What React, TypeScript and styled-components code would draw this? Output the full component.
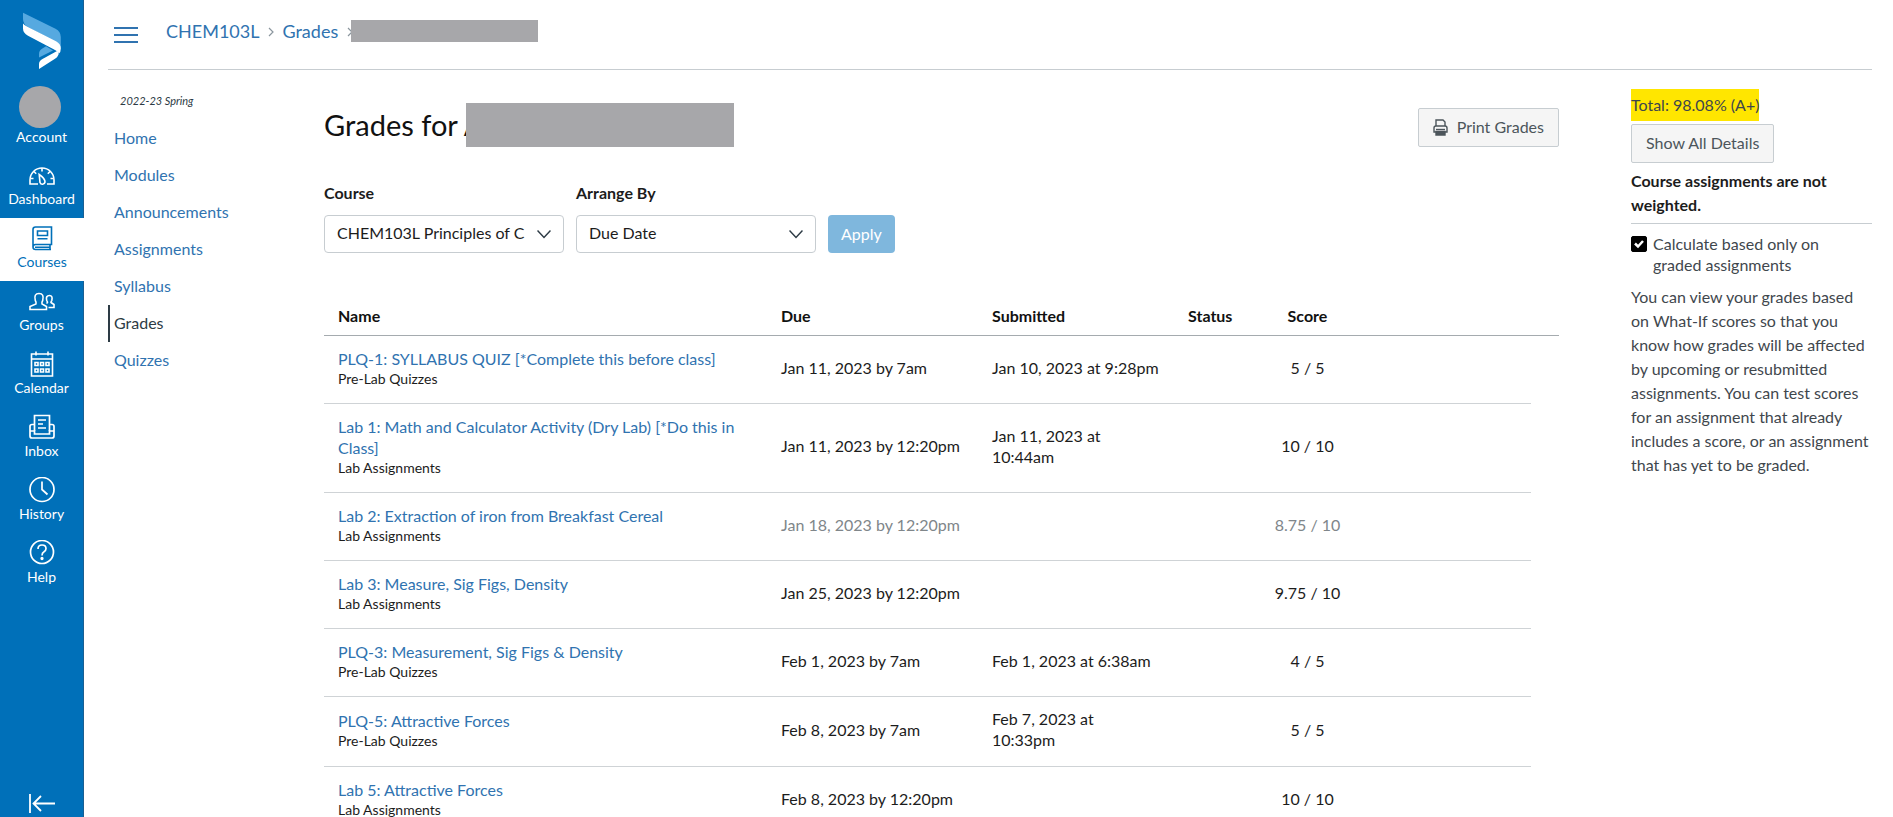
import React from "react";
import styled, { createGlobalStyle, css } from "styled-components";

const BLUE = "#0070b9";
const LINK = "#3073b0";
const TEXT = "#2d3b45";
const INK = "#1c1c1c";
const MASK = "#a7a7aa";

const GlobalStyle = createGlobalStyle`
  *, *::before, *::after { box-sizing: border-box; }
  body {
    margin: 0;
    background: #fff;
    color: ${INK};
    font-family: Lato, "Open Sans", sans-serif;
    font-size: 16px;
    line-height: 24px;
  }
  button, input, select { font: inherit; }
  a { color: ${LINK}; text-decoration: none; }
`;

const Shell = styled.div`
  display: flex;
  height: 100vh;
`;

/* Global navigation */

const GlobalNav = styled.nav`
  display: flex;
  flex-direction: column;
  flex: none;
  width: 84px;
  background: ${BLUE};
  border-right: 1px solid #1a5f92;
`;

const LogoLink = styled.a`
  display: block;
  height: 86px;
  padding: 12px 0 0 22px;
`;

const NavList = styled.ul`
  list-style: none;
  margin: 0;
  padding: 0;
`;

const navLook = css<{ $active?: boolean }>`
  display: flex;
  flex-direction: column;
  align-items: center;
  color: ${(p) => (p.$active ? BLUE : "#fff")};
  background: ${(p) => (p.$active ? "#fff" : "transparent")};
  font-size: 14px;
  line-height: 18px;
`;

const AccountLink = styled.a`
  ${navLook}
  height: 69px;
`;

const Avatar = styled.span`
  width: 42px;
  height: 42px;
  margin-right: 4px;
  border-radius: 50%;
  background: ${MASK};
`;

const NavLink = styled.a<{ $active?: boolean }>`
  ${navLook}
  gap: 2px;
  height: 63px;
  padding-top: 7px;
  margin-right: ${(p) => (p.$active ? "-1px" : "0")};
`;

const CollapseButton = styled.button`
  display: flex;
  justify-content: center;
  margin-top: auto;
  padding: 0 0 1px;
  border: 0;
  color: #fff;
  background: transparent;
`;

/* Page */

const Page = styled.div`
  flex: 1;
  min-width: 0;
  padding: 0 21px 0 24px;
  overflow-y: auto;
  scrollbar-width: none;
`;

const TopBar = styled.header`
  display: flex;
  align-items: center;
  height: 70px;
  padding: 0 0 8px 6px;
  border-bottom: 1px solid #c7cdd1;
`;

const MenuButton = styled.button`
  display: flex;
  margin: 8px 28px 0 0;
  padding: 0;
  border: 0;
  color: ${LINK};
  background: transparent;
`;

const Crumbs = styled.ol`
  display: flex;
  align-items: center;
  list-style: none;
  margin: 0;
  padding: 0;
  font-size: 18px;
`;

const Crumb = styled.li`
  display: flex;
  align-items: center;
`;

const Separator = styled.svg`
  margin: 2px 8px 0 9px;
  color: #8b969e;
`;

const Mask = styled.span<{ $w: number; $h: number; $overlap: number }>`
  position: relative;
  display: block;
  width: ${(p) => p.$w}px;
  height: ${(p) => p.$h}px;
  margin-left: -${(p) => p.$overlap}px;
  background: ${MASK};
`;

const Columns = styled.div`
  display: grid;
  grid-template-columns: 216px minmax(0, 1fr) 241px;
  align-items: start;
`;

/* Course navigation */

const CourseNav = styled.nav`
  padding-top: 22px;
`;

const Term = styled.p`
  margin: 0 0 10px;
  padding-left: 12px;
  font-size: 11px;
  line-height: 18px;
  font-style: italic;
  color: ${TEXT};
`;

const CourseLink = styled.a<{ $active?: boolean }>`
  display: block;
  width: 192px;
  height: 37px;
  padding-left: 4px;
  border-left: 2px solid ${(p) => (p.$active ? TEXT : "transparent")};
  color: ${(p) => (p.$active ? TEXT : LINK)};
  line-height: 36px;
`;

/* Main column */

const Main = styled.main`
  margin-right: 72px;
  padding-top: 32px;
`;

const TitleRow = styled.div`
  display: flex;
  justify-content: space-between;
  align-items: flex-end;
  height: 45px;
`;

const Title = styled.h1`
  display: flex;
  align-items: center;
  margin: 0;
  font-size: 29px;
  font-weight: 400;
  line-height: 45px;
  white-space: nowrap;
  color: #111;
`;

const GreyButton = styled.button`
  display: inline-flex;
  align-items: center;
  gap: 9px;
  height: 39px;
  padding: 0 14px 1px;
  border: 1px solid #c7cdd1;
  border-radius: 2px;
  background: #f5f5f5;
  color: #4c555b;
`;

const Filters = styled.form`
  display: flex;
  align-items: flex-end;
  gap: 12px;
  margin-top: 34px;
`;

const Field = styled.div`
  width: 240px;
`;

const FieldLabel = styled.label`
  display: block;
  margin-bottom: 10px;
  font-weight: 700;
`;

const SelectBox = styled.div`
  position: relative;
  color: ${TEXT};
`;

const Select = styled.select`
  display: block;
  width: 100%;
  height: 38px;
  padding: 0 38px 2px 12px;
  border: 1px solid #c7cdd1;
  border-radius: 4px;
  appearance: none;
  background: #fff;
  color: ${INK};
`;

const SelectArrow = styled.svg`
  position: absolute;
  right: 13px;
  top: 12px;
  pointer-events: none;
`;

const ApplyButton = styled.button`
  height: 38px;
  padding: 0 13px 1px;
  border: 0;
  border-radius: 4px;
  background: #7fb7dd;
  color: #fff;
`;

const Table = styled.table`
  width: 100%;
  margin-top: 43px;
  table-layout: fixed;
  border-collapse: separate;
  border-spacing: 0;
  line-height: 21px;
`;

const HeadCell = styled.th<{ $center?: boolean }>`
  height: 40px;
  padding: 0 14px;
  border-bottom: 1px solid #a5abaf;
  font-weight: 700;
  text-align: ${(p) => (p.$center ? "center" : "left")};
  color: #111;
`;

const Cell = styled.td<{ $muted?: boolean; $center?: boolean }>`
  padding: ${(p) => (p.$center ? "11px 0 16px" : "11px 14px 16px")};
  border-bottom: 1px solid #cfd3d6;
  vertical-align: middle;
  text-align: ${(p) => (p.$center ? "center" : "left")};
  color: ${(p) => (p.$muted ? "#80868a" : INK)};
`;

const BlankCell = styled.td``;

const NameCell = styled.th`
  padding: 12px 14px 15px;
  border-bottom: 1px solid #cfd3d6;
  font-weight: 400;
  text-align: left;
`;

const Group = styled.div`
  font-size: 14px;
  line-height: 19px;
  color: ${INK};
`;

/* Right column */

const Aside = styled.aside`
  padding-top: 19px;
  color: #3f474d;
`;

const Total = styled.div`
  width: fit-content;
  margin-bottom: 3px;
  padding: 4px 0;
  background: #ffe600;
`;

const Weighting = styled.p`
  margin: 6px 0;
  padding-bottom: 6px;
  border-bottom: 1px solid #c7cdd1;
  font-weight: 700;
  color: ${INK};
`;

const CheckRow = styled.div`
  display: flex;
  align-items: flex-start;
  gap: 6px;
  margin: 9px 0 10px;
  padding-right: 24px;
  line-height: 21px;
`;

const CheckBox = styled.span`
  position: relative;
  display: flex;
  flex: none;
  margin-top: 3px;
`;

const CheckInput = styled.input`
  width: 16px;
  height: 16px;
  margin: 0;
  appearance: none;
  border: 1px solid #000;
  border-radius: 2px;
  background: #fff;
  &:checked { background: #000; }
`;

const CheckMark = styled.svg`
  position: absolute;
  inset: 0;
  pointer-events: none;
`;

const Note = styled.p`
  margin: 0;
`;

/* Icons */

const Icon = ({ children, stroke = 2 }: { children: React.ReactNode; stroke?: number }) => (
  <svg width="26" height="26" viewBox="0 0 26 26" fill="none" stroke="currentColor" strokeWidth={stroke} aria-hidden="true">
    {children}
  </svg>
);

const Logo = () => (
  <svg width="40" height="58" viewBox="0 0 40 58" aria-hidden="true">
    <path d="M1 0.8 L33.500 16.800 Q38.800 19.600 38.800 25 V37 L34 30 L6 15 Q1 12 1 7 Z" fill="#56a9e0" />
    <path d="M17 45.500 V42 Q17 38.500 20 36.800 L24 34.200 L31 38.500 Z" fill="#56a9e0" />
    <path d="M1 11.500 Q2 13 5 14.500 L34 29.200 Q38.800 31.800 38.800 36.500 Q38.800 40 37 41.500 Q36.500 39.800 33 38 L6 23.800 Q1 21 1 16.500 Z" fill="#fff" />
    <path d="M17 57 V52 Q17 49 20.500 47 L35.500 38.800 Q37.500 41.500 36 43.500 Q35.500 45.200 33 46.800 Z" fill="#fff" />
  </svg>
);

const DashboardIcon = () => (
  <Icon stroke={1.6}>
    <path d="M9 22 H1 V18 A12 12 0 0 1 25 18 V22 H18" />
    <path d="M13 6 V9.500 M5 9.500 L7.200 11.700 M21 9.500 L18.800 11.700 M1.500 16.500 H4.500 M21.500 16.500 H24.500" />
    <path d="M10.200 12.500 Q16 16.500 16 20 A2.600 2.600 0 0 1 11 20.500 Z" />
  </Icon>
);

const CoursesIcon = () => (
  <Icon stroke={1.6}>
    <path d="M22.500 19.500 H6.500 A2.500 2.500 0 0 0 4 22 V4.500 A2.500 2.500 0 0 1 6.500 2 H22.500 Z" />
    <path d="M4 22 A2.500 2.500 0 0 0 6.500 24.500 H22 M21 20 V24 M6 22.300 H21" />
    <path d="M8.500 6 H18.500 V10.500 H8.500 Z M8.500 13.800 H18.500" />
  </Icon>
);

const GroupsIcon = () => (
  <Icon stroke={1.6}>
    <path d="M1 21.500 V18.500 L7 16 Q7.500 14.500 6.300 12.500 Q4.500 5.500 10 5.500 Q15.500 5.500 13.700 12.500 Q12.500 14.500 13 16 L17.500 18.500 V21.500 Z" />
    <path d="M17.500 15.500 L18.500 14.500 Q18.500 13.500 17.700 12.500 Q16.500 7.500 20.500 7.500 Q24 7.500 22.800 12.500 Q22 13.500 22 14.500 L25 16.500 V19.500 H19.500" />
  </Icon>
);

const CalendarIcon = () => (
  <Icon stroke={1.6}>
    <path d="M2.500 3 H23.500 V25 H2.500 Z M2.500 8 H23.500" />
    <path d="M7 0.500 V4.500 M19 0.500 V4.500" />
    <path d="M6 11.500 H9 V14.500 H6 Z M11.500 11.500 H14.500 V14.500 H11.500 Z M17 11.500 H20 V14.500 H17 Z M6 18 H9 V21 H6 Z M11.500 18 H14.500 V21 H11.500 Z M17 18 H20 V21 H17 Z" />
  </Icon>
);

const InboxIcon = () => (
  <Icon stroke={1.7}>
    <path d="M5.500 17 V1.500 H20.500 V17" />
    <path d="M5.500 10.500 H3 Q1 10.500 1 12.500 V22 Q1 24 3 24 H23 Q25 24 25 22 V12.500 Q25 10.500 23 10.500 H20.500" />
    <path d="M1 17 H5.500 V20 H20.500 V17 H25" />
    <path d="M9 6 H17 M9 10 H14 M9 14 H17" />
  </Icon>
);

const HistoryIcon = () => (
  <Icon stroke={1.7}>
    <circle cx="13" cy="12.5" r="12" />
    <path d="M13 4.500 V12.500 L18.500 17.500" />
  </Icon>
);

const HelpIcon = () => (
  <Icon stroke={1.7}>
    <circle cx="13" cy="12" r="11.500" />
    <path d="M9 9 Q9 5 13 5 Q17 5 17 8.500 Q17 10.500 15 11.800 Q13 13 13 15.500" />
    <circle cx="13" cy="18.500" r="0.800" fill="currentColor" />
  </Icon>
);

const PrintIcon = () => (
  <svg width="15" height="17" viewBox="0 0 15 17" fill="none" stroke="currentColor" strokeWidth="1.400" aria-hidden="true">
    <path d="M3 7 V1 H10 L12 3 V7" />
    <path d="M3 13 H1 V9 Q1 7 3 7 H12 Q14 7 14 9 V13 H12" />
    <path d="M3 10.500 H12" />
    <path d="M3 12.500 H12 V16 H3 Z" fill="currentColor" />
  </svg>
);

const navItems = [
  { label: "Dashboard", icon: <DashboardIcon /> },
  { label: "Courses", icon: <CoursesIcon />, active: true },
  { label: "Groups", icon: <GroupsIcon /> },
  { label: "Calendar", icon: <CalendarIcon /> },
  { label: "Inbox", icon: <InboxIcon /> },
  { label: "History", icon: <HistoryIcon /> },
  { label: "Help", icon: <HelpIcon /> },
];

const courseLinks = ["Home", "Modules", "Announcements", "Assignments", "Syllabus", "Grades", "Quizzes"];

interface Assignment {
  name: string;
  group: string;
  due: string;
  submitted?: string;
  score: string;
  muted?: boolean;
}

const assignments: Assignment[] = [
  { name: "PLQ-1: SYLLABUS QUIZ [*Complete this before class]", group: "Pre-Lab Quizzes", due: "Jan 11, 2023 by 7am", submitted: "Jan 10, 2023 at 9:28pm", score: "5 / 5" },
  { name: "Lab 1: Math and Calculator Activity (Dry Lab) [*Do this in Class]", group: "Lab Assignments", due: "Jan 11, 2023 by 12:20pm", submitted: "Jan 11, 2023 at 10:44am", score: "10 / 10" },
  { name: "Lab 2: Extraction of iron from Breakfast Cereal", group: "Lab Assignments", due: "Jan 18, 2023 by 12:20pm", score: "8.75 / 10", muted: true },
  { name: "Lab 3: Measure, Sig Figs, Density", group: "Lab Assignments", due: "Jan 25, 2023 by 12:20pm", score: "9.75 / 10" },
  { name: "PLQ-3: Measurement, Sig Figs & Density", group: "Pre-Lab Quizzes", due: "Feb 1, 2023 by 7am", submitted: "Feb 1, 2023 at 6:38am", score: "4 / 5" },
  { name: "PLQ-5: Attractive Forces", group: "Pre-Lab Quizzes", due: "Feb 8, 2023 by 7am", submitted: "Feb 7, 2023 at 10:33pm", score: "5 / 5" },
  { name: "Lab 5: Attractive Forces", group: "Lab Assignments", due: "Feb 8, 2023 by 12:20pm", score: "10 / 10" },
];

const Chevron = () => (
  <Separator width="6" height="10" viewBox="0 0 6 10" fill="none" stroke="currentColor" strokeWidth="1.200" aria-hidden="true">
    <path d="M1 1 L5 5 L1 9" />
  </Separator>
);

const Dropdown = ({ id, label, value }: { id: string; label: string; value: string }) => (
  <Field>
    <FieldLabel htmlFor={id}>{label}</FieldLabel>
    <SelectBox>
      <Select id={id} defaultValue={value}>
        <option>{value}</option>
      </Select>
      <SelectArrow width="14" height="14" viewBox="0 0 14 14" fill="none" stroke="currentColor" strokeWidth="1.500" aria-hidden="true">
        <path d="M0.500 3.500 L7 10.500 L13.500 3.500" />
      </SelectArrow>
    </SelectBox>
  </Field>
);

const AssignmentRow = ({ item }: { item: Assignment }) => (
  <tr>
    <NameCell scope="row">
      <a href="#assignment">{item.name}</a>
      <Group>{item.group}</Group>
    </NameCell>
    <Cell $muted={item.muted}>{item.due}</Cell>
    <Cell>{item.submitted}</Cell>
    <Cell />
    <Cell $center $muted={item.muted}>{item.score}</Cell>
    <Cell />
    <BlankCell />
  </tr>
);

export default function App() {
  return (
    <>
      <GlobalStyle />
      <Shell>
        <GlobalNav aria-label="Global">
          <LogoLink href="#home" aria-label="Home">
            <Logo />
          </LogoLink>
          <NavList>
            <li>
              <AccountLink href="#account">
                <Avatar />
                Account
              </AccountLink>
            </li>
            {navItems.map((item) => (
              <li key={item.label}>
                <NavLink href={`#${item.label.toLowerCase()}`} $active={item.active}>
                  {item.icon}
                  {item.label}
                </NavLink>
              </li>
            ))}
          </NavList>
          <CollapseButton type="button" aria-label="Minimize navigation">
            <Icon stroke={1.8}>
              <path d="M1 4 V23 M4.500 13.500 H26 M12 6 L4.500 13.500 L12 21" />
            </Icon>
          </CollapseButton>
        </GlobalNav>

        <Page>
          <TopBar>
            <MenuButton type="button" aria-label="Toggle course menu">
              <svg width="24" height="18" viewBox="0 0 24 18" fill="none" stroke="currentColor" strokeWidth="2">
                <path d="M0 2 H24 M0 9 H24 M0 16 H24" />
              </svg>
            </MenuButton>
            <Crumbs>
              <Crumb><a href="#course">CHEM103L</a><Chevron /></Crumb>
              <Crumb><a href="#grades">Grades</a><Chevron /></Crumb>
              <Crumb><Mask $w={187} $h={22} $overlap={10} /></Crumb>
            </Crumbs>
          </TopBar>

          <Columns>
            <CourseNav aria-label="Course">
              <Term>2022-23 Spring</Term>
              {courseLinks.map((label) => (
                <CourseLink key={label} href={`#${label.toLowerCase()}`} $active={label === "Grades"}>
                  {label}
                </CourseLink>
              ))}
            </CourseNav>

            <Main>
              <TitleRow>
                <Title>
                  Grades for A
                  <Mask $w={268} $h={44} $overlap={17} />
                </Title>
                <GreyButton type="button">
                  <PrintIcon />
                  Print Grades
                </GreyButton>
              </TitleRow>

              <Filters>
                <Dropdown id="course" label="Course" value="CHEM103L Principles of C" />
                <Dropdown id="arrange" label="Arrange By" value="Due Date" />
                <ApplyButton type="button">Apply</ApplyButton>
              </Filters>

              <Table>
                <colgroup>
                  <col />
                  <col width="211" />
                  <col width="196" />
                  <col width="87" />
                  <col width="93" />
                  <col width="177" />
                  <col width="28" />
                </colgroup>
                <thead>
                  <tr>
                    <HeadCell scope="col">Name</HeadCell>
                    <HeadCell scope="col">Due</HeadCell>
                    <HeadCell scope="col">Submitted</HeadCell>
                    <HeadCell scope="col">Status</HeadCell>
                    <HeadCell scope="col" $center>Score</HeadCell>
                    <HeadCell colSpan={2} />
                  </tr>
                </thead>
                <tbody>
                  {assignments.map((item) => (
                    <AssignmentRow key={item.name} item={item} />
                  ))}
                </tbody>
              </Table>
            </Main>

            <Aside>
              <Total>Total: 98.08% (A+)</Total>
              <GreyButton type="button">Show All Details</GreyButton>
              <Weighting>Course assignments are not weighted.</Weighting>
              <CheckRow>
                <CheckBox>
                  <CheckInput type="checkbox" id="graded-only" defaultChecked />
                  <CheckMark width="16" height="16" viewBox="0 0 16 16" fill="none" stroke="#fff" strokeWidth="2.500" aria-hidden="true">
                    <path d="M4 7.500 L7 10.500 L12 5" />
                  </CheckMark>
                </CheckBox>
                <label htmlFor="graded-only">Calculate based only on graded assignments</label>
              </CheckRow>
              <Note>
                You can view your grades based on What-If scores so that you know how grades will be affected by
                upcoming or resubmitted assignments. You can test scores for an assignment that already includes a
                score, or an assignment that has yet to be graded.
              </Note>
            </Aside>
          </Columns>
        </Page>
      </Shell>
    </>
  );
}
